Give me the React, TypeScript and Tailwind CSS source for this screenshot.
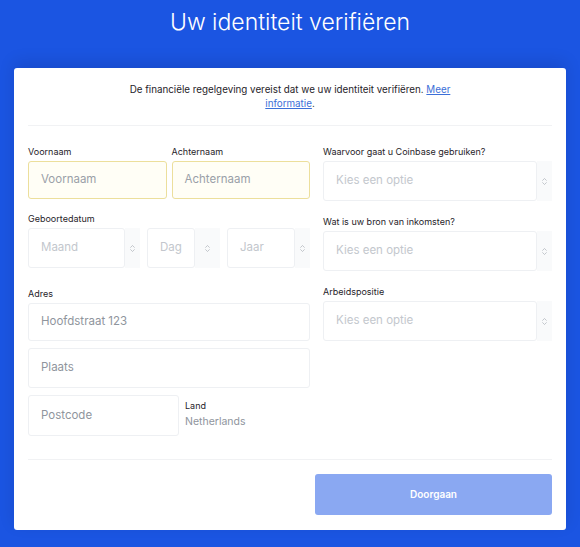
import { ChevronsUpDown } from 'lucide-react';

const font = { fontFamily: 'Inter, "Noto Sans", sans-serif' };

function Label({ children }: { children: React.ReactNode }) {
  return <div className="mb-[3px] text-[9px] leading-[12px] text-[#1f2329]">{children}</div>;
}

function TextBox({ placeholder, yellow = false, className = '' }: { placeholder: string; yellow?: boolean; className?: string }) {
  return (
    <div
      className={`flex items-center rounded-[3px] border px-3 text-[11.5px] ${
        yellow ? 'border-[#ecdf9c] bg-[#fffef6] text-[#9aa0a8]' : 'border-[#eef0f3] bg-white text-[#8f959d]'
      } ${className}`}
    >
      {placeholder}
    </div>
  );
}

function Select({ placeholder, arrowW = 'w-[15px]', className = '' }: { placeholder: string; arrowW?: string; className?: string }) {
  return (
    <div className={`flex h-10 ${className}`}>
      <div className="flex flex-1 items-center rounded-[3px] border border-[#eef0f3] bg-white px-3 text-[11.5px] text-[#c3c7cd]">
        {placeholder}
      </div>
      <div className={`flex ${arrowW} items-center justify-center bg-[#f9fafb]`}>
        <ChevronsUpDown size={9} strokeWidth={1.5} className="text-[#9ba1a9]" />
      </div>
    </div>
  );
}

export default function App() {
  return (
    <div className="h-[547px] w-[580px] bg-[#1b55e2]" style={font}>
      <h1 className="pt-[6px] text-center text-[23px] font-light leading-[32px] text-white">Uw identiteit verifiëren</h1>
      <div className="mx-[14px] mt-[30px] rounded-[3px] bg-white px-[14px] shadow-[0_-6px_16px_rgba(0,0,40,0.12)]">
        <p className="px-[96px] pt-[15px] pb-[14px] text-center text-[9.8px] leading-[14px] text-[#1f2329]">
          De financiële regelgeving vereist dat we uw identiteit verifiëren.{' '}
          <span className="text-[#3c6fd8] underline">Meer</span>{' '}
          <span className="text-[#3c6fd8] underline">informatie</span>.
        </p>
        <div className="h-px bg-[#f1f2f4]" />

        <div className="flex gap-[13px] pt-[20px]">
          <div className="w-[282px]">
            <div className="flex gap-[5px]">
              <div className="flex-1">
                <Label>Voornaam</Label>
                <TextBox placeholder="Voornaam" yellow className="h-[38px]" />
              </div>
              <div className="flex-1">
                <Label>Achternaam</Label>
                <TextBox placeholder="Achternaam" yellow className="h-[38px]" />
              </div>
            </div>

            <div className="mt-[14px]">
              <Label>Geboortedatum</Label>
              <div className="flex gap-[7px]">
                <Select placeholder="Maand" className="w-[112px]" />
                <Select placeholder="Dag" arrowW="w-[25px]" className="w-[73px]" />
                <Select placeholder="Jaar" className="w-[83px]" />
              </div>
            </div>

            <div className="mt-[20px]">
              <Label>Adres</Label>
              <TextBox placeholder="Hoofdstraat 123" className="h-[38px]" />
              <TextBox placeholder="Plaats" className="mt-[7px] h-[40px]" />
              <div className="mt-[7px] flex gap-[6px]">
                <TextBox placeholder="Postcode" className="h-[41px] w-[151px]" />
                <div className="pt-[5px]">
                  <div className="text-[9px] leading-[12px] text-[#1f2329]">Land</div>
                  <div className="mt-[3px] text-[10.5px] leading-[14px] text-[#8f959d]">Netherlands</div>
                </div>
              </div>
            </div>
          </div>

          <div className="flex-1">
            <Label>Waarvoor gaat u Coinbase gebruiken?</Label>
            <Select placeholder="Kies een optie" />
            <div className="mt-[15px]">
              <Label>Wat is uw bron van inkomsten?</Label>
              <Select placeholder="Kies een optie" />
            </div>
            <div className="mt-[15px]">
              <Label>Arbeidspositie</Label>
              <Select placeholder="Kies een optie" />
            </div>
          </div>
        </div>

        <div className="mt-[23px] h-px bg-[#f1f2f4]" />
        <div className="flex justify-end pt-[14px] pb-[15px]">
          <button className="h-[41px] w-[237px] rounded-[3px] bg-[#8aa8f2] text-[10px] font-semibold text-white">
            Doorgaan
          </button>
        </div>
      </div>
    </div>
  );
}
